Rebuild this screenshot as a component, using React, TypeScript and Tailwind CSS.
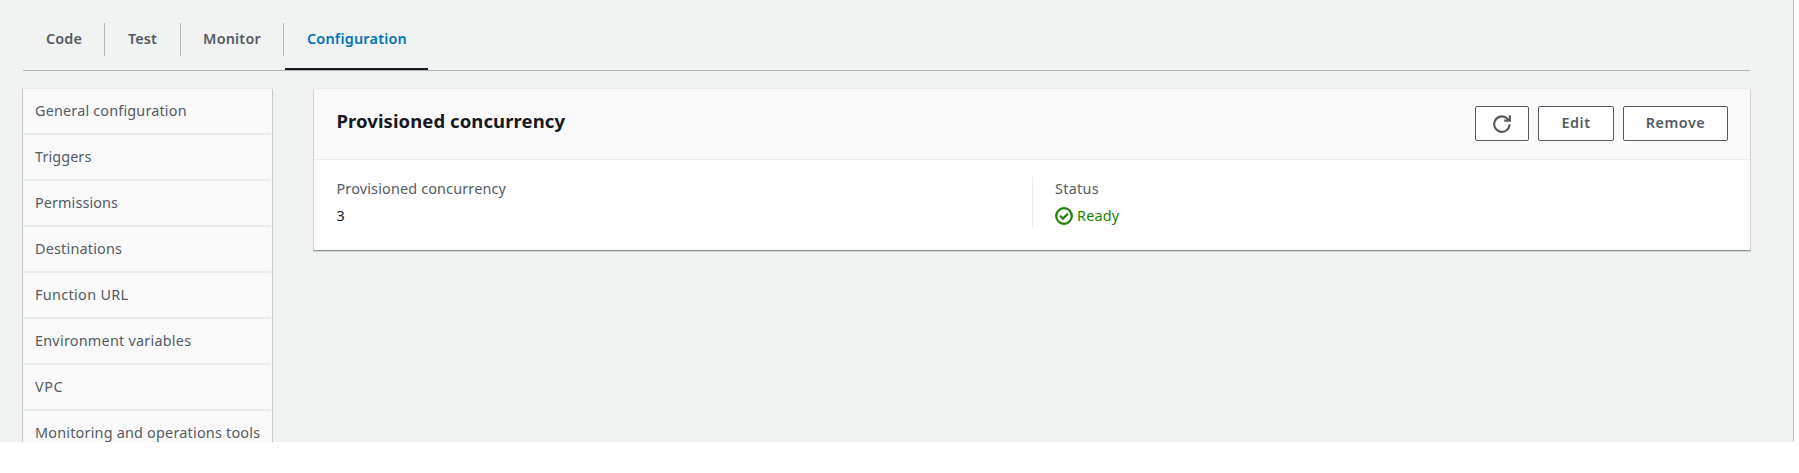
import type { ReactNode } from "react";

const tabs = [
  { label: "Code", width: "w-[82px]", spacing: "pl-px tracking-[0.15px]" },
  { label: "Test", width: "w-[76px]", spacing: "tracking-[0.15px]" },
  { label: "Monitor", width: "w-[103px]", spacing: "tracking-[0.2px]" },
];

const sections = [
  { label: "General configuration", spacing: "tracking-[0.18px]" },
  { label: "Triggers", spacing: "tracking-[0.1px]" },
  { label: "Permissions", spacing: "tracking-[0.1px]" },
  { label: "Destinations", spacing: "tracking-[0.2px]" },
  { label: "Function URL", spacing: "tracking-[0.34px]" },
  { label: "Environment variables", spacing: "tracking-[0.24px]" },
  { label: "VPC", spacing: "tracking-[0.6px]" },
  { label: "Monitoring and operations tools", spacing: "tracking-[0.21px]" },
];

function Button({ className, children }: { className: string; children: ReactNode }) {
  return (
    <button
      className={`flex h-[35px] items-center justify-center rounded-[2px] border border-[#545b64] bg-white pb-[2px] font-semibold tracking-[0.5px] text-[#545b64] ${className}`}
    >
      {children}
    </button>
  );
}

function RefreshIcon() {
  return (
    <svg className="mt-[2px] size-[18px]" viewBox="0 0 18 18" fill="none" stroke="#545b64" strokeWidth="2.1">
      <path d="M16.6 9.2A7.7 7.7 0 1 1 13.8 3.2L16.2 5.2" />
      <path d="M16.9 0.3V5.6H11.2" />
    </svg>
  );
}

function ReadyIcon() {
  return (
    <svg className="size-[18px]" viewBox="0 0 18 18" fill="none" stroke="#1d8102" strokeWidth="2.2">
      <circle cx="9" cy="9" r="7.8" />
      <path d="M5 8.8L8 11.6L12.8 6.8" />
    </svg>
  );
}

export default function App() {
  return (
    <div className="h-[473px] w-full overflow-hidden bg-white font-['Noto_Sans',sans-serif] text-[14.4px] leading-[22px] text-[#545b64]">
      <div className="h-[442px] w-[1794px] overflow-hidden border-r border-[#bfc4c4] bg-[#f1f3f3] pl-[23px]">
        <nav className="flex h-[71px] w-[1727px] border-b border-[#aab7b8] pt-[23px] font-semibold">
          {tabs.map((tab) => (
            <div
              key={tab.label}
              className={`box-border flex h-[33px] shrink-0 justify-center border-r border-[#aab7b8] pt-[5px] ${tab.width} ${tab.spacing}`}
            >
              {tab.label}
            </div>
          ))}
          <div className="ml-px flex h-[47px] w-[143px] justify-center border-b-2 border-[#16191f] pt-[5px] pl-px tracking-[0.22px] text-[#0073bb]">
            Configuration
          </div>
        </nav>
        <div className="flex items-start pt-[18px]">
          <aside className="-ml-px w-[251px] border-x border-[#c3c9ca] bg-[#fafafa] px-px shadow-[0_-1px_0_#eaeded]">
            {sections.map((section) => (
              <div
                key={section.label}
                className={`h-[46px] border-b-2 border-[#eaeded] pl-[11px] pt-[11px] whitespace-nowrap ${section.spacing}`}
              >
                {section.label}
              </div>
            ))}
          </aside>
          <main className="ml-[40px] w-[1438px] border border-t-0 border-x-[#cdd1d2] border-b-[#879596] bg-white shadow-[0_1px_0_#d5dbdb,0_-1px_0_#eaeded]">
            <header className="flex h-[71px] items-start justify-between border-b border-[#eaeded] bg-[#fafafa] pr-[22px] pl-[22.5px]">
              <h2 className="pt-[18px] text-[18.5px] leading-[27px] font-bold tracking-[0.08px] text-[#16191f]">
                Provisioned concurrency
              </h2>
              <div className="flex gap-[9px] pt-[17px]">
                <Button className="w-[54px]">
                  <RefreshIcon />
                </Button>
                <Button className="w-[76px]">Edit</Button>
                <Button className="w-[105px]">Remove</Button>
              </div>
            </header>
            <div className="flex h-[90px] pt-[17px]">
              <div className="w-[718px] pt-px pl-[22.5px]">
                <div className="tracking-[0.16px]">Provisioned concurrency</div>
                <div className="pt-[5px] text-[#16191f]">3</div>
              </div>
              <div className="h-[51px] border-l border-[#eaeded] pt-px pl-[22px]">
                <div className="tracking-[0.3px]">Status</div>
                <div className="flex items-center gap-[4px] pt-[5px] text-[#1d8102]">
                  <ReadyIcon />
                  <span className="tracking-[0.2px]">Ready</span>
                </div>
              </div>
            </div>
          </main>
        </div>
      </div>
    </div>
  );
}
